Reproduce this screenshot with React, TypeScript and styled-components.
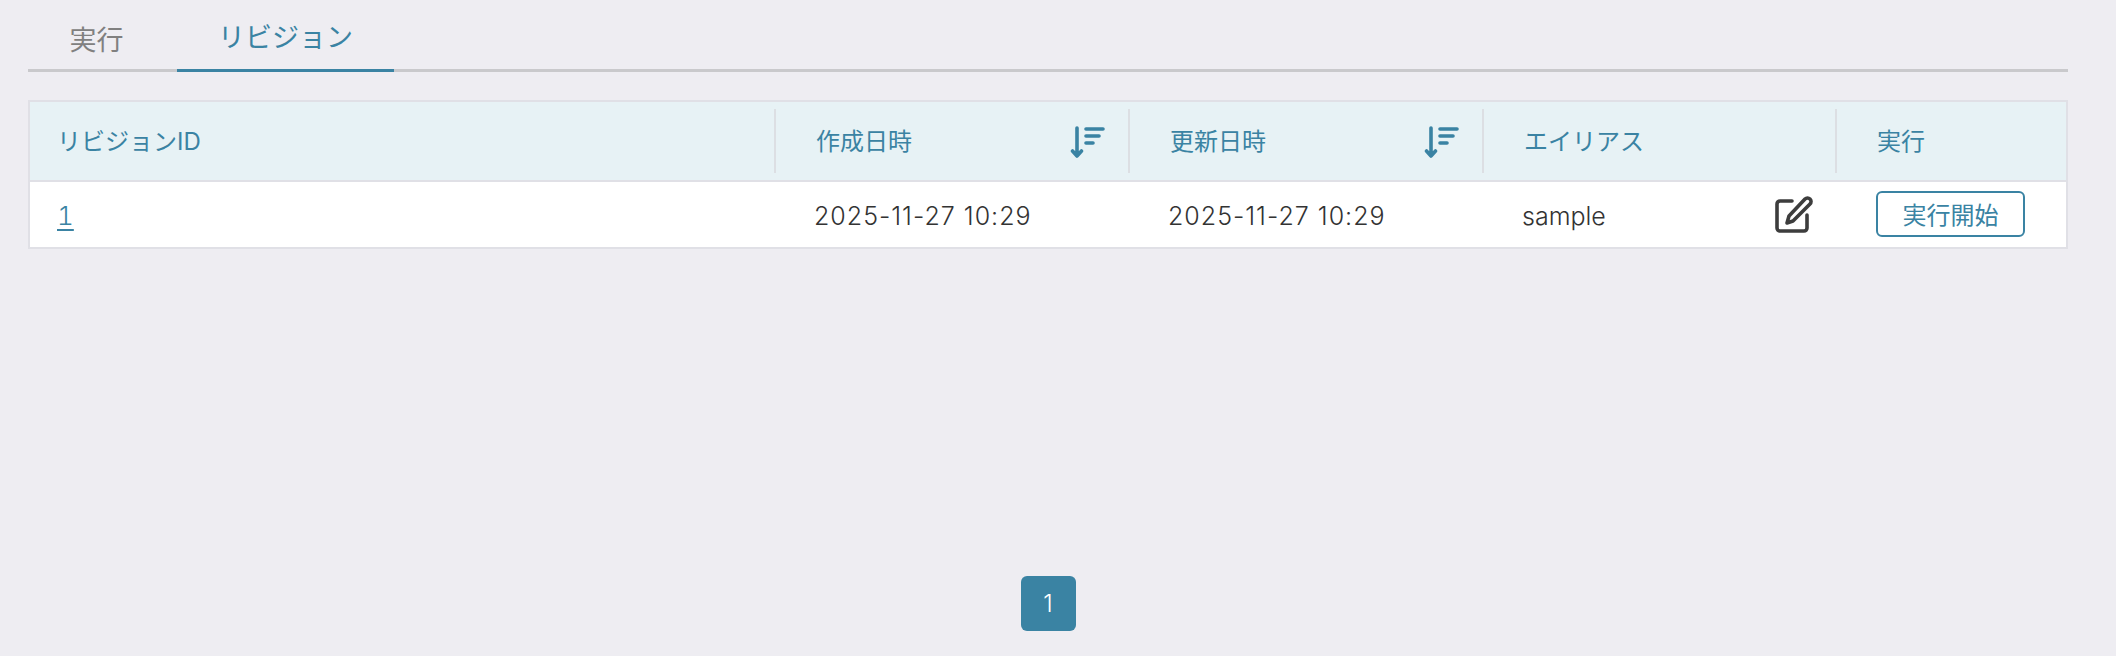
import React from "react";
import styled, { createGlobalStyle } from "styled-components";

const Global = createGlobalStyle`
  html, body { margin: 0; padding: 0; background: #eeedf2; }
  body { font-family: Inter, "Noto Sans CJK JP", sans-serif; font-weight: 400; }
`;
const Page = styled.div`
  width: 2116px; height: 656px; box-sizing: border-box; padding: 0 48px 0 28px;
  display: flex; flex-direction: column; overflow: hidden;
`;
const Tabs = styled.div`
  display: flex; gap: 12px; height: 72px; box-sizing: border-box; border-bottom: 3px solid #c9c9cc;
`;
const Tab = styled.div<{ $active?: boolean; $w: number }>`
  width: ${p => p.$w}px; height: 72px; box-sizing: border-box; text-align: center; flex: none;
  font-size: 27px; line-height: 1; padding-top: ${p => (p.$active ? 24 : 27)}px;
  color: ${p => (p.$active ? "#3a83a3" : "#808080")};
  ${p => p.$active && "border-bottom: 3px solid #3a83a3;"}
`;
const Table = styled.div`
  margin-top: 28px; border: 2px solid #e0e0e6; background: #fff; box-sizing: border-box; height: 149px;
`;
const Row = styled.div<{ $head?: boolean }>`
  display: grid; grid-template-columns: 744px 354px 354px 353px 231px; box-sizing: border-box;
  height: ${p => (p.$head ? 80 : 65)}px; align-items: center;
  ${p => p.$head && "background: #e7f2f5; border-bottom: 2px solid #e0e0e6; color: #3a83a3;"}
`;
const HeadCell = styled.div<{ $first?: boolean }>`
  height: 64px; display: flex; align-items: center; justify-content: space-between; box-sizing: border-box;
  font-size: 24px; padding: 0 22px 4px ${p => (p.$first ? 27 : 40)}px;
  ${p => !p.$first && "border-left: 2px solid #dcdfe3;"}
`;
const Cell = styled.div<{ $first?: boolean }>`
  display: flex; align-items: center; justify-content: space-between; box-sizing: border-box;
  font-size: 25px; font-weight: 300; color: #333; padding: 2px 22px 0 ${p => (p.$first ? 27 : 40)}px;
`;
const DateText = styled.span`
  letter-spacing: 1px;
`;
const IdLink = styled.a`
  color: #3a83a3; text-decoration: underline; text-underline-offset: 4px; font-size: 26px; font-weight: 300;
  font-variant-numeric: tabular-nums;
`;
const Run = styled.button`
  width: 149px; height: 46px; margin: -4px 0 0 1px; border: 2px solid #3a83a3; border-radius: 6px; background: #fff;
  color: #3a83a3; font: 400 24px "Noto Sans CJK JP", sans-serif; padding: 0; line-height: 1;
`;
const Pager = styled.div`
  display: flex; justify-content: center; margin-top: 327px;
`;
const PageBtn = styled.div`
  width: 55px; height: 55px; border-radius: 6px; background: #3a83a3; color: #fff;
  display: flex; align-items: center; justify-content: center; font-size: 24px; font-weight: 300;
`;
const SortSvg = styled.svg`
  margin-top: 6px;
`;
const EditSvg = styled.svg`
  margin-top: -2px;
`;

const SortIcon = () => (
  <SortSvg width="36" height="34" viewBox="0 0 36 34" fill="none" stroke="#3a83a3" strokeWidth="3.6" strokeLinecap="round">
    <path d="M7 3v28M2.500 26l4.500 5 4.500-5" strokeLinejoin="round" />
    <path d="M16 4h17M16 11h13M16 18h7" />
  </SortSvg>
);
const EditIcon = () => (
  <EditSvg width="38" height="38" viewBox="0 0 38 38" fill="none" stroke="#3d3d3d" strokeWidth="3.6" strokeLinecap="round" strokeLinejoin="round">
    <path d="M17 5H5a3 3 0 0 0-3 3v24a3 3 0 0 0 3 3h24a3 3 0 0 0 3-3V19" />
    <path d="M30 3a3.400 3.400 0 0 1 5 5L18 25l-6 2 2-7z" />
  </EditSvg>
);

export default function App() {
  return (
    <Page>
      <Global />
      <Tabs>
        <Tab $w={137}>実行</Tab>
        <Tab $w={217} $active>リビジョン</Tab>
      </Tabs>
      <Table>
        <Row $head>
          <HeadCell $first>リビジョンID</HeadCell>
          <HeadCell>作成日時<SortIcon /></HeadCell>
          <HeadCell>更新日時<SortIcon /></HeadCell>
          <HeadCell>エイリアス</HeadCell>
          <HeadCell>実行</HeadCell>
        </Row>
        <Row>
          <Cell $first><IdLink>1</IdLink></Cell>
          <Cell><DateText>2025-11-27 10:29</DateText></Cell>
          <Cell><DateText>2025-11-27 10:29</DateText></Cell>
          <Cell>sample<EditIcon /></Cell>
          <Cell><Run>実行開始</Run></Cell>
        </Row>
      </Table>
      <Pager><PageBtn>1</PageBtn></Pager>
    </Page>
  );
}
